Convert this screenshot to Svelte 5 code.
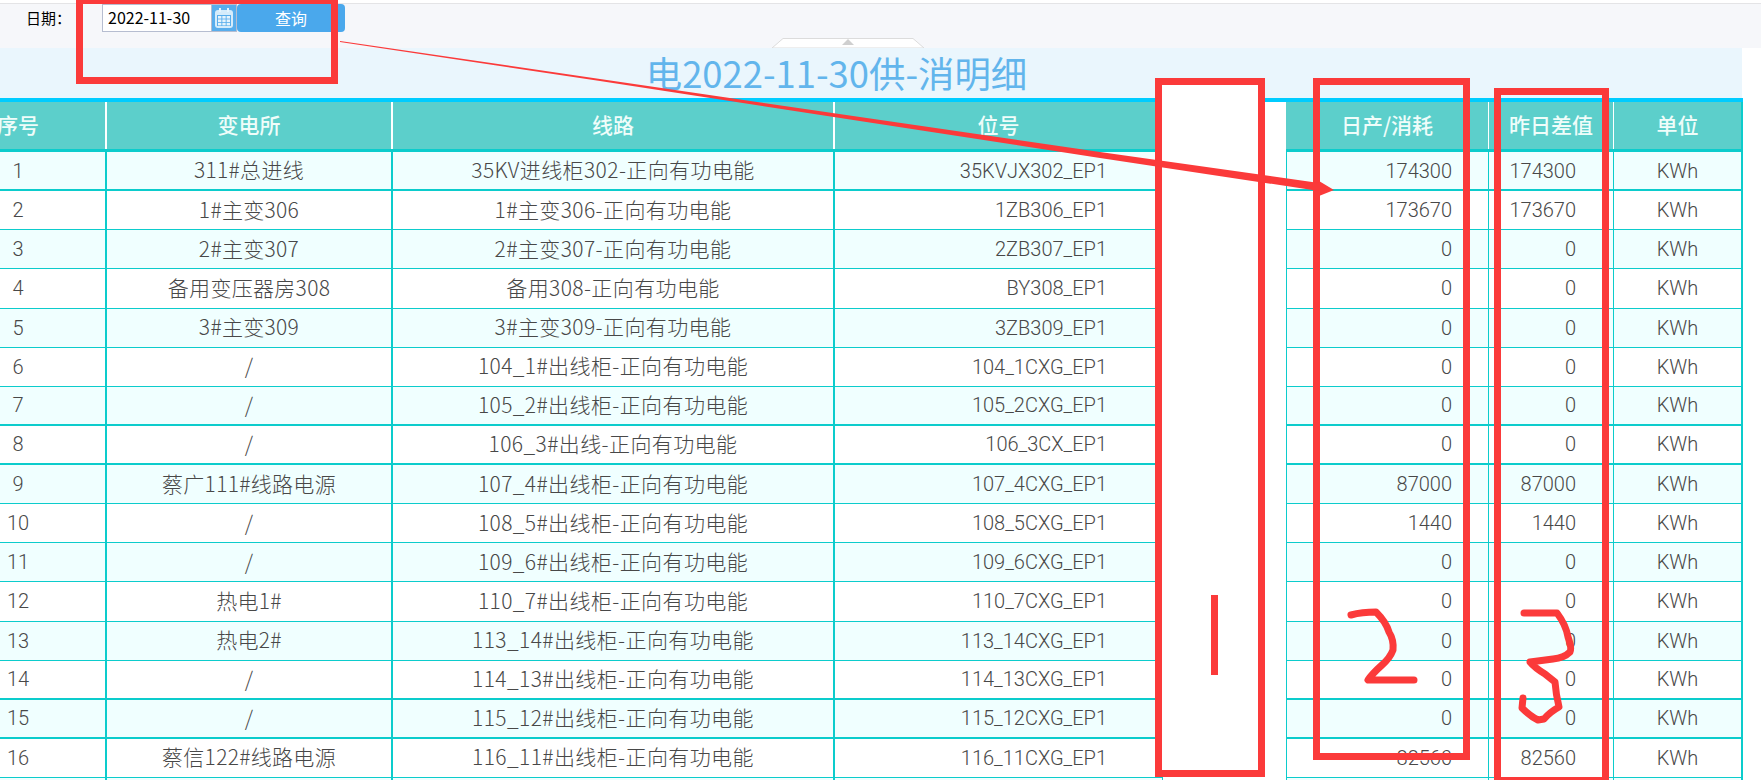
<script>
  const rows = [
    ["1", "311#总进线", "35KV进线柜302-正向有功电能", "35KVJX302_EP1", "174300", "174300"],
    ["2", "1#主变306", "1#主变306-正向有功电能", "1ZB306_EP1", "173670", "173670"],
    ["3", "2#主变307", "2#主变307-正向有功电能", "2ZB307_EP1", "0", "0"],
    ["4", "备用变压器房308", "备用308-正向有功电能", "BY308_EP1", "0", "0"],
    ["5", "3#主变309", "3#主变309-正向有功电能", "3ZB309_EP1", "0", "0"],
    ["6", "/", "104_1#出线柜-正向有功电能", "104_1CXG_EP1", "0", "0"],
    ["7", "/", "105_2#出线柜-正向有功电能", "105_2CXG_EP1", "0", "0"],
    ["8", "/", "106_3#出线-正向有功电能", "106_3CX_EP1", "0", "0"],
    ["9", "蔡广111#线路电源", "107_4#出线柜-正向有功电能", "107_4CXG_EP1", "87000", "87000"],
    ["10", "/", "108_5#出线柜-正向有功电能", "108_5CXG_EP1", "1440", "1440"],
    ["11", "/", "109_6#出线柜-正向有功电能", "109_6CXG_EP1", "0", "0"],
    ["12", "热电1#", "110_7#出线柜-正向有功电能", "110_7CXG_EP1", "0", "0"],
    ["13", "热电2#", "113_14#出线柜-正向有功电能", "113_14CXG_EP1", "0", "0"],
    ["14", "/", "114_13#出线柜-正向有功电能", "114_13CXG_EP1", "0", "0"],
    ["15", "/", "115_12#出线柜-正向有功电能", "115_12CXG_EP1", "0", "0"],
    ["16", "蔡信122#线路电源", "116_11#出线柜-正向有功电能", "116_11CXG_EP1", "82560", "82560"]
  ];
  // these row lines came out thicker in the screenshot
  const thick = ["1", "7", "8", "14", "15"];
</script>

<div class="page">
  <div class="toolbar">
    <span class="label">日期：</span>
    <div class="date">2022-11-30</div>
    <div class="cal">
      <svg width="20" height="22" viewBox="0 0 20 22">
        <rect x="1" y="3" width="18" height="18" rx="3" fill="#d5ecfb" />
        <rect x="3" y="8" width="14" height="11" fill="#58adec" />
        <g fill="#e6f4fd">
          <rect x="4" y="9" width="3.4" height="2.6" />
          <rect x="8.3" y="9" width="3.4" height="2.6" />
          <rect x="12.6" y="9" width="3.4" height="2.6" />
          <rect x="4" y="12.4" width="3.4" height="2.6" />
          <rect x="8.3" y="12.4" width="3.4" height="2.6" />
          <rect x="12.6" y="12.4" width="3.4" height="2.6" />
          <rect x="4" y="15.8" width="3.4" height="2.6" />
          <rect x="8.3" y="15.8" width="3.4" height="2.6" />
          <rect x="12.6" y="15.8" width="3.4" height="2.6" />
        </g>
        <rect x="5" y="1" width="2" height="4" fill="#e6f4fd" />
        <rect x="13" y="1" width="2" height="4" fill="#e6f4fd" />
      </svg>
    </div>
    <button class="query">查询</button>
    <svg class="handle" width="154" height="10" viewBox="0 0 154 10">
      <polygon points="1,10 12,0.5 142,0.5 153,10" fill="#fff" stroke="#dcdcdc" />
      <polygon points="71,7 77,1 83,7" fill="#cfcfcf" />
    </svg>
  </div>

  <div class="title">电2022-11-30供-消明细</div>

  <div class="tables">
    <div class="pane left">
      <div class="row head">
        <div class="c seq">序号</div>
        <div class="c sub">变电所</div>
        <div class="c line">线路</div>
        <div class="c tag">位号</div>
      </div>
      {#each rows as r}
        <div class="row" class:thick={thick.includes(r[0])}>
          <div class="c seq">{r[0]}</div>
          <div class="c sub">{r[1]}</div>
          <div class="c line">{r[2]}</div>
          <div class="c tag num">{r[3]}</div>
        </div>
      {/each}
      <div class="row">
        <div class="c seq"></div>
        <div class="c sub"></div>
        <div class="c line"></div>
        <div class="c tag"></div>
      </div>
    </div>

    <div class="pane right">
      <div class="row head">
        <div class="c day">日产/消耗</div>
        <div class="c diff">昨日差值</div>
        <div class="c unit">单位</div>
      </div>
      {#each rows as r}
        <div class="row" class:thick={thick.includes(r[0])}>
          <div class="c day num">{r[4]}</div>
          <div class="c diff num">{r[5]}</div>
          <div class="c unit">KWh</div>
        </div>
      {/each}
      <div class="row">
        <div class="c day"></div>
        <div class="c diff"></div>
        <div class="c unit"></div>
      </div>
    </div>
  </div>

  <!-- annotations someone drew on top of the screenshot -->
  <svg class="marks" width="1761" height="780" viewBox="0 0 1761 780">
    <rect x="1158.5" y="81.5" width="103" height="692" fill="#fff" stroke="#fb3a3a" stroke-width="7" />
    <rect x="1316.5" y="81.5" width="150" height="675" fill="none" stroke="#fb3a3a" stroke-width="7" />
    <rect x="1497.5" y="91.5" width="108" height="689" fill="none" stroke="#fb3a3a" stroke-width="7" />
    <rect x="79.5" y="0.5" width="255" height="80" fill="none" stroke="#fb3a3a" stroke-width="7" />
    <polygon fill="#fb3a3a" points="340,41 600,79 1100,152 1319,183 1319,181 1334,190 1319,196 1319,191 1100,158 600,81 340,42" />
    <rect x="1211" y="595" width="7" height="80" fill="#fb3a3a" />
    <g fill="none" stroke="#fb3a3a" stroke-width="7" stroke-linecap="round" stroke-linejoin="round">
      <path d="M1351 615 Q1362 612 1376 612 Q1386 622 1389 632 Q1394 640 1393 650 Q1390 658 1382 665 Q1372 674 1368 680 L1414 680" />
      <path d="M1524 613 L1557 613 Q1566 625 1568 637 Q1572 648 1570 652 Q1564 658 1553 659 L1530 662 Q1535 668 1545 674 L1555 682 Q1556 695 1559 707 Q1550 712 1544 719 L1538 720 Q1530 716 1522 708 L1523 698" />
    </g>
  </svg>
</div>

<style>
  :global(body) {
    margin: 0;
    overflow: hidden;
    background: #fff;
  }

  .page {
    position: relative;
    width: 1761px;
    height: 780px;
    padding-top: 3px;
    box-sizing: border-box;
    overflow: hidden;
    font-family: "Noto Sans CJK SC", "Noto Sans", sans-serif;
  }

  .toolbar {
    position: relative;
    display: flex;
    align-items: flex-start;
    box-sizing: border-box;
    height: 45px;
    padding-left: 26px;
    border-top: 1px solid #e4e4e6;
    background: #f6f7fa;
  }

  .label {
    width: 76px;
    font-size: 15px;
    line-height: 27px;
    color: #000;
  }

  .date {
    box-sizing: border-box;
    width: 110px;
    height: 28px;
    padding-left: 5px;
    border: 1px solid #b6bdd0;
    background: #fff;
    font-size: 16px;
    line-height: 25px;
    color: #000;
  }

  .cal {
    box-sizing: border-box;
    width: 25px;
    height: 28px;
    display: flex;
    align-items: center;
    justify-content: center;
    background: #58adec;
    border-right: 1px solid #b6bdd0;
    border-top: 1px solid #b6bdd0;
    border-bottom: 1px solid #b6bdd0;
  }

  .query {
    width: 108px;
    height: 28px;
    padding: 0;
    border: 0;
    border-radius: 4px;
    background: #4aa8ec;
    color: #fff;
    font-family: inherit;
    font-size: 16px;
    line-height: 28px;
  }

  .handle {
    position: absolute;
    left: 771px;
    bottom: 0;
  }

  .title {
    width: 1811px;
    height: 50px;
    margin-left: -69px;
    background: #eaf6fd;
    text-align: center;
    font-size: 36.4px;
    line-height: 49px;
    color: #62b5ec;
  }

  .tables {
    display: flex;
    width: 1743px;
    border-top: 4px solid #00ccff;
  }

  .pane.left {
    width: 1232px;
    margin-left: -69px;
    margin-right: 123px;
    flex: none;
  }

  .pane.right {
    width: 457px;
    flex: none;
  }

  .row {
    display: flex;
    box-sizing: border-box;
    height: 39.13px;
    border-bottom: 1px solid #0ccccc;
    background: #fff;
    font-size: 21px;
    font-weight: 300;
    color: #484848;
  }

  .row:nth-child(even) {
    background: #f0ffff;
  }

  .row.thick {
    border-bottom-width: 2px;
  }

  .row.head {
    height: 50px;
    border-bottom: 3px solid #0ccccc;
    background: #5ccfcb;
    font-size: 21px;
    font-weight: 500;
    color: #effdfa;
  }

  .c {
    box-sizing: border-box;
    height: 100%;
    display: flex;
    align-items: center;
    justify-content: center;
    padding-bottom: 3px;
    white-space: nowrap;
  }

  .seq { width: 176px; border-right: 2px solid #0ccccc; }
  .sub { width: 286px; border-right: 2px solid #0ccccc; letter-spacing: 0.3px; }
  .line { width: 442px; border-right: 2px solid #0ccccc; letter-spacing: 0.4px; }
  .tag { width: 328px; border-right: 1px solid #0ccccc; }
  .day { width: 203px; border-left: 1px solid #0ccccc; border-right: 1px solid #0ccccc; }
  .diff { width: 125px; border-right: 1px solid #0ccccc; }
  .unit { width: 129px; border-right: 2px solid #0ccccc; }

  .head .c { border-right-color: #fff; letter-spacing: 0; }
  .head .day { border-left: 0; }
  .head .unit { border-right-color: #0ccccc; }

  .row:not(.head) .seq,
  .row:not(.head) .num,
  .row:not(.head) .unit {
    font-family: Roboto, "Noto Sans CJK SC", sans-serif;
    font-size: 20px;
    padding-bottom: 0;
  }

  .num {
    justify-content: flex-end;
  }
  .row .tag.num { padding-right: 55px; }
  .row .day.num { padding-right: 36px; }
  .row .diff.num { padding-right: 37px; }

  .marks {
    position: absolute;
    left: 0;
    top: 0;
    pointer-events: none;
  }
</style>
